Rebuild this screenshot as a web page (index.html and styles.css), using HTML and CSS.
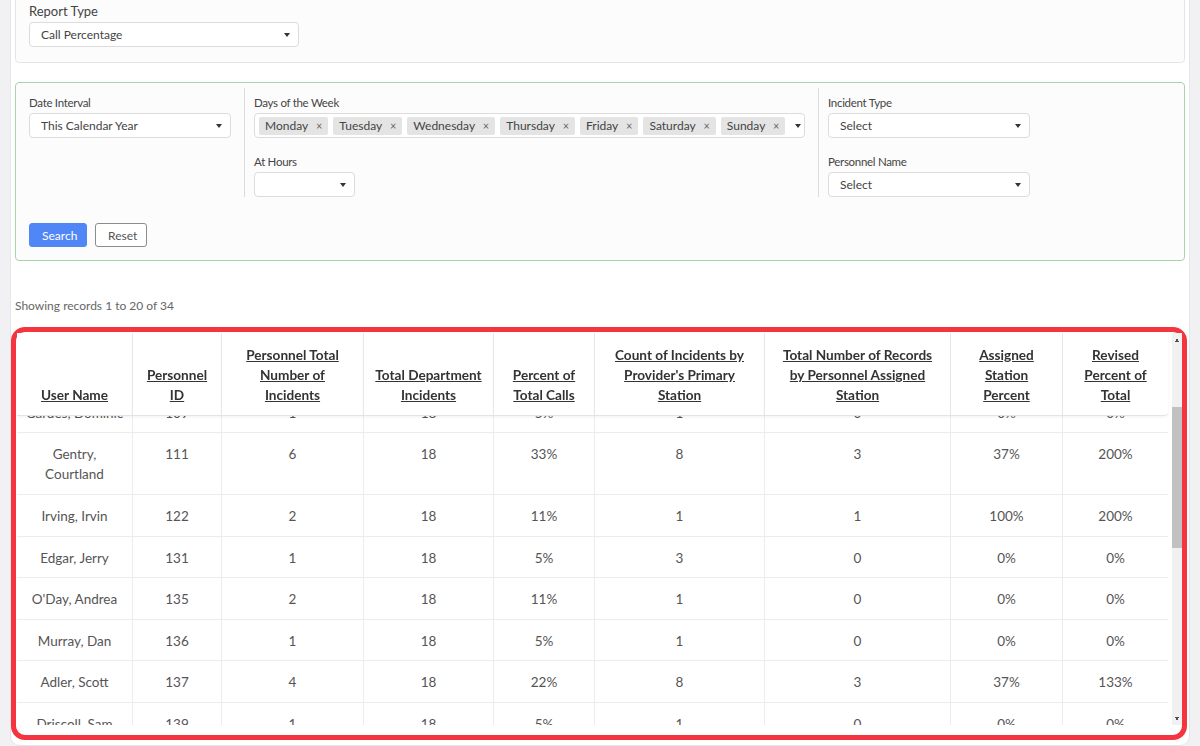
FILE: index.html
```html
<!DOCTYPE html>
<html lang="en">

<head>
    <meta charset="UTF-8">
    <meta name="viewport" content="width=device-width, initial-scale=1.0">
    <title>Call Percentage Report</title>
    <link rel="stylesheet" href="styles.css">
</head>

<body>
    <div class="panel">
        <div class="card card-report">
            <label class="report-label">Report Type</label>
            <div class="select select-report"><span>Call Percentage</span><i class="caret"></i></div>
        </div>

        <div class="card card-filters">
            <div class="filter-grid">
                <div class="filter-col">
                    <div class="field">
                        <label>Date Interval</label>
                        <div class="select select-wide"><span>This Calendar Year</span><i class="caret"></i></div>
                    </div>
                </div>

                <div class="filter-col divided">
                    <div class="field">
                        <label>Days of the Week</label>
                        <div class="select select-multi">
                            <ul class="chips">
                                <li>Monday <b>×</b></li>
                                <li>Tuesday <b>×</b></li>
                                <li>Wednesday <b>×</b></li>
                                <li>Thursday <b>×</b></li>
                                <li>Friday <b>×</b></li>
                                <li>Saturday <b>×</b></li>
                                <li>Sunday <b>×</b></li>
                            </ul>
                            <i class="caret"></i>
                        </div>
                    </div>
                    <div class="field">
                        <label>At Hours</label>
                        <div class="select select-hours"><span></span><i class="caret"></i></div>
                    </div>
                </div>

                <div class="filter-col divided">
                    <div class="field">
                        <label>Incident Type</label>
                        <div class="select select-wide"><span>Select</span><i class="caret"></i></div>
                    </div>
                    <div class="field">
                        <label>Personnel Name</label>
                        <div class="select select-wide"><span>Select</span><i class="caret"></i></div>
                    </div>
                </div>
            </div>

            <div class="actions">
                <button type="button" class="btn btn-search">Search</button>
                <button type="button" class="btn btn-reset">Reset</button>
            </div>
        </div>

        <p class="record-count">Showing records 1 to 20 of 34</p>

        <div class="report-box">
            <div class="report-view">
                <div class="report-scroll" id="reportScroll">
                    <table class="report">
                        <colgroup>
                            <col style="width:116px">
                            <col style="width:89px">
                            <col style="width:142px">
                            <col style="width:130px">
                            <col style="width:101px">
                            <col style="width:170px">
                            <col style="width:186px">
                            <col style="width:112px">
                            <col style="width:105px">
                        </colgroup>
                        <thead>
                            <tr>
                                <th><a href="#">User Name</a></th>
                                <th><a href="#">Personnel ID</a></th>
                                <th><a href="#">Personnel Total Number of Incidents</a></th>
                                <th><a href="#">Total Department Incidents</a></th>
                                <th><a href="#">Percent of Total Calls</a></th>
                                <th><a href="#">Count of Incidents by Provider's Primary Station</a></th>
                                <th><a href="#">Total Number of Records by Personnel Assigned Station</a></th>
                                <th><a href="#">Assigned Station Percent</a></th>
                                <th><a href="#">Revised Percent of Total</a></th>
                            </tr>
                        </thead>
                        <tbody>
                            <tr><td>Abbott, Ken</td><td>101</td><td>3</td><td>18</td><td>16%</td><td>4</td><td>2</td><td>50%</td><td>150%</td></tr>
                            <tr><td>Bishop, Laura</td><td>104</td><td>1</td><td>18</td><td>5%</td><td>1</td><td>1</td><td>100%</td><td>100%</td></tr>
                            <tr><td>Castellano, Margaret</td><td>107</td><td>2</td><td>18</td><td>11%</td><td>3</td><td>2</td><td>66%</td><td>100%</td></tr>
                            <tr><td>Gardes, Dominic</td><td>109</td><td>1</td><td>18</td><td>5%</td><td>1</td><td>0</td><td>0%</td><td>0%</td></tr>
                            <tr id="firstVisible"><td>Gentry, Courtland</td><td>111</td><td>6</td><td>18</td><td>33%</td><td>8</td><td>3</td><td>37%</td><td>200%</td></tr>
                            <tr><td>Irving, Irvin</td><td>122</td><td>2</td><td>18</td><td>11%</td><td>1</td><td>1</td><td>100%</td><td>200%</td></tr>
                            <tr><td>Edgar, Jerry</td><td>131</td><td>1</td><td>18</td><td>5%</td><td>3</td><td>0</td><td>0%</td><td>0%</td></tr>
                            <tr><td>O'Day, Andrea</td><td>135</td><td>2</td><td>18</td><td>11%</td><td>1</td><td>0</td><td>0%</td><td>0%</td></tr>
                            <tr><td>Murray, Dan</td><td>136</td><td>1</td><td>18</td><td>5%</td><td>1</td><td>0</td><td>0%</td><td>0%</td></tr>
                            <tr><td>Adler, Scott</td><td>137</td><td>4</td><td>18</td><td>22%</td><td>8</td><td>3</td><td>37%</td><td>133%</td></tr>
                            <tr><td>Driscoll, Sam</td><td>139</td><td>1</td><td>18</td><td>5%</td><td>1</td><td>0</td><td>0%</td><td>0%</td></tr>
                            <tr><td>Hale, Monica</td><td>141</td><td>2</td><td>18</td><td>11%</td><td>3</td><td>1</td><td>33%</td><td>200%</td></tr>
                            <tr><td>Kowalski, Theodore</td><td>144</td><td>1</td><td>18</td><td>5%</td><td>8</td><td>3</td><td>37%</td><td>33%</td></tr>
                            <tr><td>Lin, Grace</td><td>146</td><td>3</td><td>18</td><td>16%</td><td>4</td><td>2</td><td>50%</td><td>150%</td></tr>
                            <tr><td>Navarro-Diaz, Luisa</td><td>150</td><td>1</td><td>18</td><td>5%</td><td>1</td><td>0</td><td>0%</td><td>0%</td></tr>
                            <tr><td>Pemberton, Alistair</td><td>152</td><td>2</td><td>18</td><td>11%</td><td>3</td><td>1</td><td>33%</td><td>200%</td></tr>
                            <tr><td>Reyes, Carmen</td><td>155</td><td>1</td><td>18</td><td>5%</td><td>1</td><td>1</td><td>100%</td><td>100%</td></tr>
                            <tr><td>Stone, Bradley</td><td>158</td><td>2</td><td>18</td><td>11%</td><td>8</td><td>2</td><td>25%</td><td>100%</td></tr>
                            <tr><td>Tate, Oliver</td><td>160</td><td>1</td><td>18</td><td>5%</td><td>1</td><td>0</td><td>0%</td><td>0%</td></tr>
                            <tr><td>Wells, Jordan</td><td>163</td><td>1</td><td>18</td><td>5%</td><td>3</td><td>1</td><td>33%</td><td>100%</td></tr>
                        </tbody>
                    </table>
                </div>

                <div class="scrollbar" aria-hidden="true">
                    <span class="scroll-btn scroll-up"></span>
                    <div class="scroll-track"><span class="scroll-thumb" id="scrollThumb"></span></div>
                    <span class="scroll-btn scroll-down"></span>
                </div>
            </div>
        </div>
    </div>

    <script>
        const scroller = document.getElementById("reportScroll");
        const thumb = document.getElementById("scrollThumb");
        const track = thumb.parentElement;
        const startRow = document.getElementById("firstVisible");

        // thumb follows the table's own scroll position
        function syncThumb() {
            const ratio = track.clientHeight / scroller.scrollHeight;
            thumb.style.height = (scroller.clientHeight * ratio) + "px";
            thumb.style.marginTop = (scroller.scrollTop * ratio) + "px";
        }

        scroller.addEventListener("scroll", syncThumb);
        scroller.scrollTop = startRow.offsetTop - 100;
        syncThumb();
    </script>
</body>

</html>
```

FILE: styles.css
```css
* {
    box-sizing: border-box;
}

body {
    margin: 0;
    overflow: hidden;
    background-color: #f1f1f4;
    font-family: Lato, "Open Sans", sans-serif;
    font-size: 12px;
    color: #444;
}

.panel {
    margin: -10px 10px 0;
    padding: 0 4px 5px;
    background-color: #fff;
    border: 1px solid #e6e6ea;
    border-radius: 10px;
}

.card {
    background-color: #fcfcfc;
    border: 1px solid #e5e5e5;
    border-radius: 4px;
}

.card-report {
    padding: 12px 13px 15px;
}

.report-label {
    display: block;
    font-size: 13px;
    line-height: 14px;
    margin-bottom: 4px;
}

/* select2-style dropdowns */
.select {
    position: relative;
    display: flex;
    align-items: center;
    height: 25px;
    padding: 0 20px 0 11px;
    background-color: #fff;
    border: 1px solid #dcdcdc;
    border-radius: 4px;
    font-size: 12px;
    color: #444;
}

.select-report {
    width: 270px;
}

.select-wide {
    width: 202px;
}

.select-hours {
    width: 101px;
}

.caret {
    position: absolute;
    right: 8px;
    top: 50%;
    margin-top: -2px;
    border-top: 4px solid #333;
    border-left: 3px solid transparent;
    border-right: 3px solid transparent;
}

.card-filters {
    margin-top: 19px;
    padding: 5px 13px 13px;
    border-color: #a9d5a9;
}

.filter-grid {
    display: grid;
    grid-template-columns: 215px 574px 1fr;
}

.filter-col {
    display: flex;
    flex-direction: column;
    gap: 17px;
    padding-top: 8px;
}

.filter-col.divided {
    border-left: 1px solid #dcdcdc;
    padding-left: 9px;
}

.field label {
    display: block;
    font-size: 11.5px;
    letter-spacing: -0.3px;
    line-height: 13px;
    margin-bottom: 4px;
}

.select-multi {
    width: 551px;
    padding: 0 20px 0 4px;
}

.select-multi .caret {
    right: 3px;
}

.chips {
    display: flex;
    gap: 5px;
    margin: 0;
    padding: 0;
    list-style: none;
}

.chips li {
    height: 18px;
    line-height: 18px;
    padding: 0 6px;
    background-color: #e4e4e4;
    border-radius: 2px;
    white-space: nowrap;
}

.chips b {
    margin-left: 5px;
    font-weight: normal;
    font-size: 11px;
    color: #666;
}

.actions {
    display: flex;
    gap: 8px;
    margin-top: 26px;
}

.btn {
    height: 24px;
    padding: 0 12px;
    font-family: inherit;
    font-size: 12px;
    border-radius: 3px;
    cursor: pointer;
}

.btn-search {
    width: 58px;
    background-color: #5086f6;
    border: 1px solid #5086f6;
    color: #fff;
}

.btn-reset {
    width: 52px;
    background-color: #fff;
    border: 1px solid #8c8c8c;
    color: #555;
}

.record-count {
    margin: 38px 0 14px;
    line-height: 14px;
    color: #666;
}

/* table box */
.report-box {
    margin: 0 -2px 0 -4px;
    padding: 1px 0 10px 1px;
    border: 5px solid #f4343f;
    border-radius: 14px;
    background-color: #fff;
}

.report-view {
    display: flex;
    height: 392px;
}

.report-scroll {
    flex: 1;
    overflow-y: auto;
    scrollbar-width: none;
}

.scrollbar {
    display: flex;
    flex-direction: column;
    width: 10px;
    background-color: #f1f1f1;
}

.scroll-btn {
    height: 13px;
    background-repeat: no-repeat;
    background-position: center;
    background-size: 6px 4px;
}

.scroll-up {
    background-image: conic-gradient(from 150deg at 50% 0, #505050 0 60deg, transparent 60deg);
}

.scroll-down {
    background-image: conic-gradient(from -30deg at 50% 100%, #505050 0 60deg, transparent 60deg);
}

.scroll-track {
    flex: 1;
}

.scroll-thumb {
    display: block;
    background-color: #c1c1c1;
}

.report {
    width: 1151px;
    table-layout: fixed;
    border-collapse: separate;
    border-spacing: 0;
    font-size: 13.5px;
    color: #555;
}

.report th {
    position: sticky;
    top: 0;
    z-index: 1;
    padding: 12px 12px 10px;
    line-height: 20px;
    vertical-align: bottom;
    font-size: 13.6px;
    font-weight: bold;
    background-color: #fff;
    border-right: 1px solid #ececec;
    border-bottom: 1px solid #e4e4e4;
    box-shadow: 0 1px 3px rgba(0, 0, 0, 0.06);
}

.report th:nth-child(4) {
    padding-left: 8px;
    padding-right: 8px;
}

.report th:last-child {
    border-right: none;
    border-bottom-right-radius: 4px;
}

.report th a {
    color: #333;
    text-decoration: underline;
}

.report td {
    padding: 11px 12px 9.6px;
    line-height: 20px;
    text-align: center;
    vertical-align: top;
    border-right: 1px solid #ececec;
    border-bottom: 1px solid #ececec;
}

.report td:first-child {
    padding-left: 8px;
    padding-right: 8px;
}

.report td:last-child {
    border-right: none;
}
```
